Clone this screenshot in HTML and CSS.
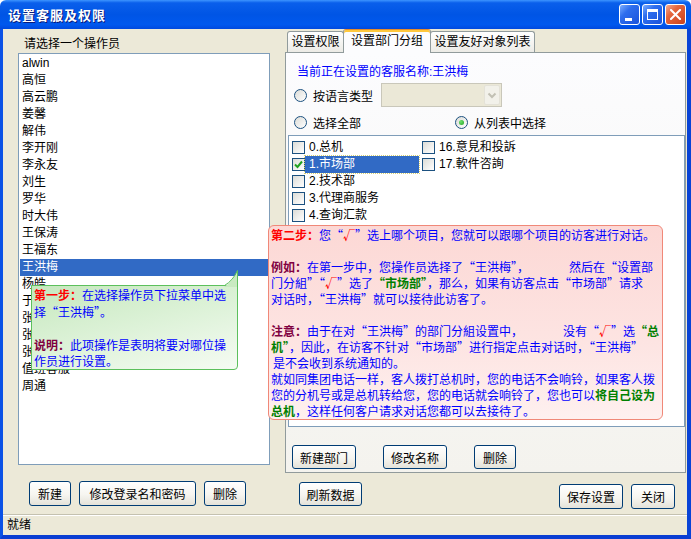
FILE: index.html
```html
<!DOCTYPE html>
<html lang="zh-CN">
<head>
  <meta charset="utf-8">
  <link rel="stylesheet" href="styles.css">
</head>
<body>
  <div class="window">
    <div class="titlebar">
      <span class="title">设置客服及权限</span>
      <div class="tb-buttons">
        <span class="tb-btn tb-min"><i></i></span>
        <span class="tb-btn tb-max"><i></i></span>
        <span class="tb-btn tb-close">
          <svg width="11" height="11" viewBox="0 0 11 11"><path d="M1 1L10 10M10 1L1 10" stroke="#fff" stroke-width="2" stroke-linecap="square"/></svg>
        </span>
      </div>
    </div>

    <div class="frame">
      <div class="main">
        <div class="left">
          <div class="caption">请选择一个操作员</div>
          <ul class="userlist">
            <li>alwin</li>
            <li>高恒</li>
            <li>高云鹏</li>
            <li>姜馨</li>
            <li>解伟</li>
            <li>李开刚</li>
            <li>李永友</li>
            <li>刘生</li>
            <li>罗华</li>
            <li>时大伟</li>
            <li>王保涛</li>
            <li>王福东</li>
            <li class="selected">王洪梅</li>
            <li>杨皓</li>
            <li>于明</li>
            <li>张华</li>
            <li>张伟</li>
            <li>张敏</li>
            <li>值班客服</li>
            <li>周通</li>
          </ul>
          <div class="left-btns">
            <button class="btn" style="width:42px">新建</button>
            <button class="btn" style="width:117px">修改登录名和密码</button>
            <button class="btn" style="width:42px">删除</button>
          </div>
        </div>

        <div class="right">
          <div class="tabs">
            <div class="tab tab-1">设置权限</div>
            <div class="tab active">设置部门分组</div>
            <div class="tab tab-3">设置友好对象列表</div>
          </div>

          <div class="panel">
            <div class="cur-name">当前正在设置的客服名称:王洪梅</div>

            <div class="opt-row1">
              <label class="radio-opt"><span class="radio"></span>按语言类型</label>
              <div class="combo">
                <span class="combo-btn">
                  <svg width="14" height="18" viewBox="0 0 14 18"><path d="M3.5 7.5L7 11L10.5 7.5" fill="none" stroke="#C2C0B4" stroke-width="2"/></svg>
                </span>
              </div>
            </div>

            <div class="opt-row2">
              <label class="radio-opt opt-all"><span class="radio"></span>选择全部</label>
              <label class="radio-opt"><span class="radio checked"></span>从列表中选择</label>
            </div>

            <div class="checklist">
              <div class="chk-item"><span class="chk"></span><span class="chk-label">0.总机</span></div>
              <div class="chk-item selected"><span class="chk checked"><svg width="11" height="11" viewBox="0 0 11 11"><path d="M2 5.5L4.5 8L9 2.5" fill="none" stroke="#21A121" stroke-width="2"/></svg></span><span class="chk-label">1.市场部</span></div>
              <div class="chk-item"><span class="chk"></span><span class="chk-label">2.技术部</span></div>
              <div class="chk-item"><span class="chk"></span><span class="chk-label">3.代理商服务</span></div>
              <div class="chk-item"><span class="chk"></span><span class="chk-label">4.查询汇款</span></div>
              <div class="chk-item col2 row1"><span class="chk"></span><span class="chk-label">16.意見和投訴</span></div>
              <div class="chk-item col2 row2"><span class="chk"></span><span class="chk-label">17.軟件咨詢</span></div>
            </div>

            <div class="panel-btns">
              <button class="btn btn-sm" style="width:64px">新建部门</button>
              <button class="btn btn-sm" style="width:64px">修改名称</button>
              <button class="btn btn-sm" style="width:42px">删除</button>
            </div>
          </div>

          <div class="bottom-row">
            <button class="btn btn-sm" style="width:63px">刷新数据</button>
            <div class="right-group">
              <button class="btn" style="width:64px">保存设置</button>
              <button class="btn" style="width:44px">关闭</button>
            </div>
          </div>
        </div>
      </div>
      <div class="statusbar">就绪</div>
    </div>

    <!-- hint bubbles laid over the form -->
    <div class="tip tip-green">
      <svg class="tip-arrow" width="14" height="17" viewBox="0 0 14 17"><path d="M0 17Q9 11 13.5 0.5L13.5 17Z" fill="#C9EAC1"/><path d="M0.5 15.5Q9 10.5 13.5 0.5L13.5 17" fill="none" stroke="#5CC05C"/></svg>
      <span class="r b">第一步：</span>在选择操作员下拉菜单中选<br>择“王洪梅”。<br><br><span class="m b">说明：</span>此项操作是表明将要对哪位操<br>作员进行设置。
    </div>

    <div class="tip tip-red">
      <span class="r b">第二步：</span>您“<span class="r b">√</span>”选上哪个项目，您就可以跟哪个项目的访客进行对话。<br>
      <br>
      <span class="m b">例如：</span>在第一步中，您操作员选择了“王洪梅”，<span class="gap"></span>然后在“设置部<br>
      门分組”“<span class="r b">√</span>”选了<span class="g b">“市场部”</span>，那么，如果有访客点击“市场部”请求<br>
      对话时，“王洪梅”就可以接待此访客了。<br>
      <br>
      <span class="m b">注意：</span>由于在对“王洪梅”的部门分組设置中，<span class="gap"></span>没有“<span class="r b">√</span>”选<span class="g b">“总</span><br>
      <span class="g b">机”</span>，因此，在访客不针对“市场部”进行指定点击对话时，“王洪梅”<br>
      <span class="indent"></span>是不会收到系统通知的。<br>
      就如同集团电话一样，客人拨打总机时，您的电话不会响铃，如果客人拨<br>
      您的分机号或是总机转给您，您的电话就会响铃了，您也可以<span class="g b">将自己设为</span><br>
      <span class="g b">总机</span>，这样任何客户请求对话您都可以去接待了。
    </div>
  </div>
</body>
</html>
```

FILE: styles.css
```css
* {
  box-sizing: border-box;
  margin: 0;
  padding: 0;
}

body {
  width: 691px;
  height: 539px;
  font: 12px "Liberation Sans", "Noto Sans CJK SC", sans-serif;
  color: #000;
  background: #fff;
}

.window {
  position: relative;
  width: 691px;
  height: 539px;
  display: flex;
  flex-direction: column;
  overflow: hidden;
}

/* title bar */
.titlebar {
  flex: 0 0 29px;
  display: flex;
  align-items: center;
  justify-content: space-between;
  padding: 0 5px 0 8px;
  background: linear-gradient(to bottom, #3D95FF 0, #0A5FEB 10%, #0055E5 50%, #0058EE 85%, #0049DE 100%);
  border-radius: 6px 6px 0 0;
}

.title {
  color: #fff;
  font-family: "Noto Sans CJK SC", sans-serif;
  font-weight: bold;
  font-size: 13px;
  letter-spacing: 1px;
  line-height: 16px;
  text-shadow: 1px 1px #0A1B7A;
}

.tb-buttons {
  display: flex;
  gap: 2px;
}

.tb-btn {
  width: 21px;
  height: 21px;
  border: 1px solid #fff;
  border-radius: 3px;
  display: flex;
  align-items: center;
  justify-content: center;
}

.tb-min,
.tb-max {
  background: linear-gradient(135deg, #7BAEFF 0%, #2E6EEE 35%, #1A52DB 100%);
}

.tb-close {
  background: linear-gradient(135deg, #F5AC92 0%, #E5663D 35%, #C9411C 100%);
}

.tb-min {
  align-items: flex-end;
  justify-content: flex-start;
  padding: 0 0 3px 5px;
}

.tb-min i {
  width: 7px;
  height: 3px;
  background: #fff;
}

.tb-max i {
  width: 11px;
  height: 11px;
  border: 1px solid #fff;
  border-top-width: 3px;
}

/* client area */
.frame {
  flex: 1;
  display: flex;
  flex-direction: column;
  background: #ECE9D8;
  border-left: 3px solid #0B52E6;
  border-right: 4px solid #0843D6;
  border-bottom: 4px solid #0A3DD2;
}

.main {
  flex: 1;
  display: flex;
}

.left {
  flex: 0 0 282px;
  padding: 7px 0 0 15px;
}

.caption {
  height: 17px;
  line-height: 17px;
  padding-left: 6px;
}

.userlist {
  list-style: none;
  width: 252px;
  height: 412px;
  border: 1px solid #7F9DB9;
  background: #fff;
  padding: 1px;
  overflow: hidden;
}

.userlist li {
  height: 17px;
  line-height: 17px;
  padding-left: 2px;
  white-space: nowrap;
}

.userlist li.selected {
  background: #316AC5;
  color: #fff;
}

.left-btns {
  display: flex;
  gap: 8px;
  margin-top: 16px;
  padding-left: 11px;
}

.btn {
  height: 25px;
  padding: 0;
  border: 1px solid #003C74;
  border-radius: 3px;
  background: linear-gradient(to bottom, #FFFFFF 0%, #F6F5F0 55%, #E4E2D9 100%);
  font: inherit;
  color: #000;
  white-space: nowrap;
}

.btn-sm {
  height: 24px;
}

.right {
  flex: 1;
  display: flex;
  flex-direction: column;
  padding-right: 1px;
}

/* tabs */
.tabs {
  height: 23px;
  display: flex;
  align-items: flex-end;
  padding-left: 2px;
}

.tab {
  height: 21px;
  line-height: 20px;
  text-align: center;
  border: 1px solid #919B9C;
  border-bottom: none;
  border-radius: 3px 3px 0 0;
  background: linear-gradient(to bottom, #FFFFFF, #ECEBE6);
  white-space: nowrap;
}

.tab-1 {
  width: 57px;
}

.tab-3 {
  width: 105px;
}

.tab.active {
  position: relative;
  z-index: 1;
  width: 88px;
  height: 24px;
  line-height: 22px;
  margin: 0 -1px -1px;
  background: #FCFCFE;
  border-top: 1px solid #E68B2C;
  box-shadow: inset 0 2px #FFC83C;
}

.panel {
  height: 421px;
  border: 1px solid #919B9C;
  background: linear-gradient(to bottom, #FCFCFE, #F4F3EE);
  padding-top: 12px;
}

.cur-name {
  color: #0000FF;
  line-height: 14px;
  padding-left: 11px;
}

.opt-row1 {
  display: flex;
  align-items: center;
  height: 24px;
  margin-top: 4px;
  padding-left: 8px;
}

.opt-row2 {
  display: flex;
  align-items: center;
  height: 17px;
  margin-top: 7px;
  padding-left: 8px;
}

.radio-opt {
  display: flex;
  align-items: center;
  gap: 6px;
  white-space: nowrap;
}

.opt-all {
  width: 161px;
}

.radio {
  width: 13px;
  height: 13px;
  border: 1px solid #1C5180;
  border-radius: 50%;
  background: linear-gradient(135deg, #DCDCD7, #FFFFFF);
  display: flex;
  align-items: center;
  justify-content: center;
}

.radio.checked::after {
  content: "";
  width: 5px;
  height: 5px;
  border-radius: 50%;
  background: radial-gradient(circle at 35% 35%, #6EE26E, #21A121);
}

.combo {
  width: 121px;
  height: 24px;
  margin-left: 8px;
  border: 1px solid #C9C7BA;
  background: #EBE8D7;
  display: flex;
  justify-content: flex-end;
  padding: 1px;
}

.combo-btn {
  width: 16px;
  border: 1px solid #E4E2D8;
  border-radius: 2px;
  background: #F2F1EA;
  display: flex;
  align-items: center;
  justify-content: center;
}

.checklist {
  width: 397px;
  height: 292px;
  margin: 4px 0 0 2px;
  border: 1px solid #7F9DB9;
  background: #fff;
  padding: 3px 2px 0 3px;
  display: grid;
  grid-template-rows: repeat(16, 17px);
  grid-template-columns: 130px 130px;
  grid-auto-flow: column;
  overflow: hidden;
}

.chk-item {
  display: flex;
  align-items: center;
  height: 17px;
}

.chk-item.col2 {
  grid-column: 2;
}

.chk-item.row1 {
  grid-row: 1;
}

.chk-item.row2 {
  grid-row: 2;
}

.chk {
  flex: none;
  width: 13px;
  height: 13px;
  border: 1px solid #1C5180;
  background: linear-gradient(135deg, #DCDCD7, #FFFFFF);
}

.chk svg {
  display: block;
}

.chk-label {
  width: 114px;
  height: 17px;
  line-height: 17px;
  padding-left: 4px;
  white-space: nowrap;
}

.chk-item.selected .chk-label {
  background: #316AC5;
  color: #fff;
  outline: 1px dotted #D8D070;
}

.panel-btns {
  display: flex;
  gap: 27px;
  margin-top: 18px;
  padding-left: 6px;
}

.bottom-row {
  display: flex;
  align-items: flex-start;
  margin-top: 9px;
  padding: 0 11px 0 14px;
}

.right-group {
  display: flex;
  gap: 8px;
  margin-left: auto;
  margin-top: 2px;
}

.statusbar {
  height: 21px;
  line-height: 20px;
  padding-left: 4px;
  border-top: 1px solid #C4C1B0;
  box-shadow: inset 0 1px #FFFFFF;
}

/* hint bubbles */
.tip {
  position: absolute;
  font-family: "Noto Sans CJK SC", sans-serif;
  font-size: 12px;
  white-space: nowrap;
  color: #0000FF;
}

.tip .b {
  font-weight: bold;
}

.tip .r {
  color: #FF0000;
}

.tip .m {
  color: #800040;
}

.tip .g {
  color: #008000;
}

.tip-green {
  left: 31px;
  top: 285px;
  width: 207px;
  height: 85px;
  padding: 1px 0 0 2px;
  line-height: 16.5px;
  border: 1px solid #5CC05C;
  border-radius: 0 0 4px 0;
  background: linear-gradient(165deg, #C6E8BE 0%, #DDF2D8 50%, #F5FBF3 100%);
}

.tip-arrow {
  position: absolute;
  right: -1px;
  top: -16px;
}

.tip-red {
  left: 268px;
  top: 225px;
  width: 395px;
  height: 195px;
  padding: 1px 0 0 2px;
  line-height: 16px;
  border: 1px solid #F08878;
  border-radius: 6px;
  background: linear-gradient(to bottom, #FCD8D5 0%, #FDE4E2 60%, #FEF0EF 100%);
}

.gap {
  display: inline-block;
  width: 40px;
}

.indent {
  display: inline-block;
  width: 2px;
}
```
